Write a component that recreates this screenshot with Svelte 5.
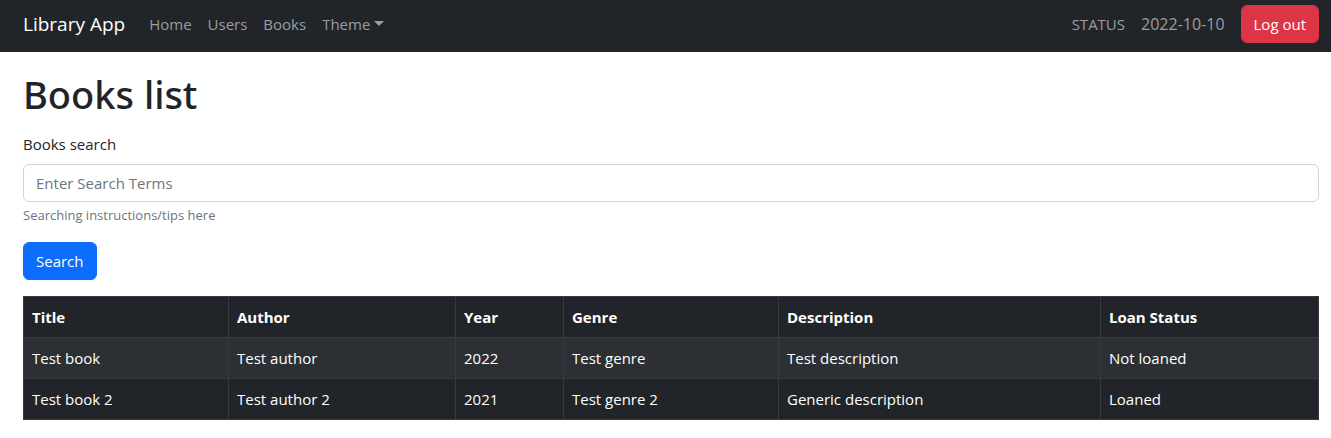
<script>
  const links = ['Home', 'Users', 'Books'];
  const columns = ['Title', 'Author', 'Year', 'Genre', 'Description', 'Loan Status'];
  const widths = [205, 227, 108, 215, 322, 218];
  const books = [
    ['Test book', 'Test author', '2022', 'Test genre', 'Test description', 'Not loaned'],
    ['Test book 2', 'Test author 2', '2021', 'Test genre 2', 'Generic description', 'Loaned'],
  ];
  const total = widths.reduce((a, b) => a + b, 0);
  let query = $state('');
</script>

<nav>
  <a class="brand" href="#top">Library App</a>
  <div class="links">
    {#each links as link}
      <a href="#{link.toLowerCase()}">{link}</a>
    {/each}
    <button type="button" class="toggle" aria-haspopup="true">Theme<span class="caret"></span></button>
  </div>
  <div class="status">
    <span>STATUS</span>
    <time datetime="2022-10-10">2022-10-10</time>
    <button type="button" class="btn danger">Log out</button>
  </div>
</nav>

<main>
  <h1>Books list</h1>
  <form onsubmit={(e) => e.preventDefault()}>
    <label for="search">Books search</label>
    <input id="search" type="text" placeholder="Enter Search Terms" aria-describedby="tips" bind:value={query} />
    <small id="tips">Searching instructions/tips here</small>
    <button type="submit" class="btn primary">Search</button>
  </form>
  <table>
    <colgroup>
      {#each widths as w}
        <col style="width: {(w / total) * 100}%" />
      {/each}
    </colgroup>
    <thead>
      <tr>
        {#each columns as column}
          <th scope="col">{column}</th>
        {/each}
      </tr>
    </thead>
    <tbody>
      {#each books as book}
        <tr>
          {#each book as value}
            <td>{value}</td>
          {/each}
        </tr>
      {/each}
    </tbody>
  </table>
</main>

<style>
  :global(body) {
    background: #fff;
    color: #212529;
    font: 15px/24px "Open Sans", "Noto Sans", sans-serif;
  }
  nav, main {
    box-sizing: border-box;
    padding: 0 12px 0 23px;
  }
  nav {
    display: flex;
    align-items: center;
    min-height: 52px;
    padding-bottom: 4px;
    background: #212529;
    color: #9b9d9e;
  }
  a { color: inherit; text-decoration: none; }
  .brand { margin-right: 24px; color: #fff; font-size: 19px; line-height: 30px; }
  .links, .status { display: flex; align-items: center; gap: 16px; }
  .status { margin-left: auto; }
  time { font-size: 16px; }
  button { font: inherit; cursor: pointer; }
  .toggle {
    display: flex;
    align-items: center;
    gap: 4px;
    padding: 0;
    border: 0;
    background: none;
    color: inherit;
  }
  .caret { margin-bottom: 2px; border: 5px solid transparent; border-top-color: currentColor; border-bottom: 0; }
  .btn {
    padding: 6px 12px;
    border: 1px solid;
    border-radius: 6px;
    color: #fff;
  }
  .danger { background: #dc3545; border-color: #dc3545; }
  .primary { background: #0d6efd; border-color: #0d6efd; }
  h1 {
    margin: 18px 0 14px;
    font-family: "Noto Sans", "Open Sans", sans-serif;
    font-size: 38px;
    line-height: 48px;
    font-weight: 500;
  }
  form { display: flex; flex-direction: column; align-items: flex-start; margin-bottom: 16px; }
  label { margin-bottom: 8px; }
  input {
    box-sizing: border-box;
    width: 100%;
    height: 38px;
    padding: 6px 12px;
    border: 1px solid #ced4da;
    border-radius: 6px;
    color: inherit;
    font: inherit;
  }
  input::placeholder { color: #6c757d; opacity: 1; }
  small { margin: 3px 0 16px; color: #6c757d; font-size: 13px; line-height: 21px; }
  table {
    width: 100%;
    table-layout: fixed;
    border-collapse: collapse;
    background: #212529;
    color: #fff;
  }
  th, td { padding: 8px; border: 1px solid #373b3e; text-align: left; }
  th { font-weight: 700; }
  tbody tr:nth-child(odd) { background: #2c3034; }
</style>
